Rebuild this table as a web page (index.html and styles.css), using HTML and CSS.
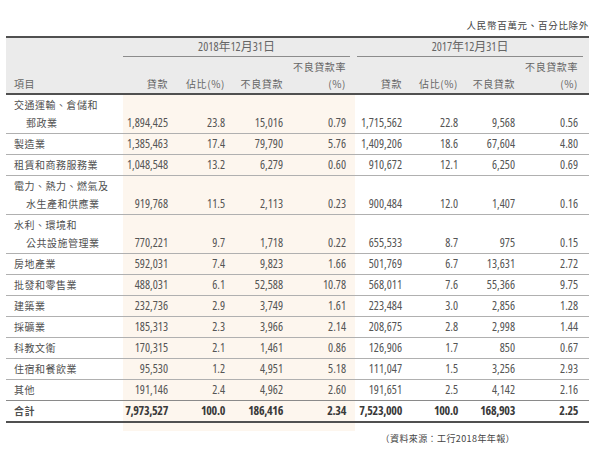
FILE: index.html
```html
<!DOCTYPE html>
<html lang="zh-Hant">
<head>
<meta charset="utf-8">
<title>貸款行業分布</title>
<link rel="stylesheet" href="styles.css">
</head>
<body>
<div class="page">
  <div class="unit">人民幣百萬元、百分比除外</div>
  <table class="loans">
    <colgroup>
      <col class="w-item"><col class="w-a"><col class="w-b"><col class="w-c"><col class="w-d"><col class="w-e"><col class="w-f"><col class="w-g"><col class="w-h">
    </colgroup>
    <thead>
      <tr class="h-group">
        <th></th>
        <th colspan="4"><div class="grp-label grp18">2018年12月31日</div></th>
        <th colspan="4"><div class="grp-label grp17">2017年12月31日</div></th>
      </tr>
      <tr class="h-cols">
        <th class="h-item">項目</th>
        <th>貸款</th>
        <th>佔比(%)</th>
        <th>不良貸款</th>
        <th>不良貸款率<br>(%)</th>
        <th>貸款</th>
        <th>佔比(%)</th>
        <th>不良貸款</th>
        <th>不良貸款率<br>(%)</th>
      </tr>
    </thead>
    <tbody>
      <tr><td class="item">交通運輸、倉儲和<span class="cont">郵政業</span></td><td class="s">1,894,425</td><td class="s">23.8</td><td class="s">15,016</td><td class="s">0.79</td><td>1,715,562</td><td>22.8</td><td>9,568</td><td>0.56</td></tr>
      <tr><td class="item">製造業</td><td class="s">1,385,463</td><td class="s">17.4</td><td class="s">79,790</td><td class="s">5.76</td><td>1,409,206</td><td>18.6</td><td>67,604</td><td>4.80</td></tr>
      <tr><td class="item">租賃和商務服務業</td><td class="s">1,048,548</td><td class="s">13.2</td><td class="s">6,279</td><td class="s">0.60</td><td>910,672</td><td>12.1</td><td>6,250</td><td>0.69</td></tr>
      <tr><td class="item">電力、熱力、燃氣及<span class="cont">水生產和供應業</span></td><td class="s">919,768</td><td class="s">11.5</td><td class="s">2,113</td><td class="s">0.23</td><td>900,484</td><td>12.0</td><td>1,407</td><td>0.16</td></tr>
      <tr><td class="item">水利、環境和<span class="cont">公共設施管理業</span></td><td class="s">770,221</td><td class="s">9.7</td><td class="s">1,718</td><td class="s">0.22</td><td>655,533</td><td>8.7</td><td>975</td><td>0.15</td></tr>
      <tr><td class="item">房地產業</td><td class="s">592,031</td><td class="s">7.4</td><td class="s">9,823</td><td class="s">1.66</td><td>501,769</td><td>6.7</td><td>13,631</td><td>2.72</td></tr>
      <tr><td class="item">批發和零售業</td><td class="s">488,031</td><td class="s">6.1</td><td class="s">52,588</td><td class="s">10.78</td><td>568,011</td><td>7.6</td><td>55,366</td><td>9.75</td></tr>
      <tr><td class="item">建築業</td><td class="s">232,736</td><td class="s">2.9</td><td class="s">3,749</td><td class="s">1.61</td><td>223,484</td><td>3.0</td><td>2,856</td><td>1.28</td></tr>
      <tr><td class="item">採礦業</td><td class="s">185,313</td><td class="s">2.3</td><td class="s">3,966</td><td class="s">2.14</td><td>208,675</td><td>2.8</td><td>2,998</td><td>1.44</td></tr>
      <tr><td class="item">科教文衛</td><td class="s">170,315</td><td class="s">2.1</td><td class="s">1,461</td><td class="s">0.86</td><td>126,906</td><td>1.7</td><td>850</td><td>0.67</td></tr>
      <tr><td class="item">住宿和餐飲業</td><td class="s">95,530</td><td class="s">1.2</td><td class="s">4,951</td><td class="s">5.18</td><td>111,047</td><td>1.5</td><td>3,256</td><td>2.93</td></tr>
      <tr class="pre-total"><td class="item">其他</td><td class="s">191,146</td><td class="s">2.4</td><td class="s">4,962</td><td class="s">2.60</td><td>191,651</td><td>2.5</td><td>4,142</td><td>2.16</td></tr>
      <tr class="total"><td class="item">合計</td><td class="s">7,973,527</td><td class="s">100.0</td><td class="s">186,416</td><td class="s">2.34</td><td>7,523,000</td><td>100.0</td><td>168,903</td><td>2.25</td></tr>
    </tbody>
  </table>
  <div class="shade-tail"></div>
  <div class="source">（資料來源：工行2018年年報）</div>
</div>
</body>
</html>
```

FILE: styles.css
```css
html, body {
  margin: 0;
  padding: 0;
  background: #ffffff;
}

body {
  font-family: "Open Sans", "Noto Sans CJK TC", sans-serif;
  font-stretch: 75%;
  color: #555555;
}

.page {
  width: 583px;
  padding: 18px 0 0 6px;
}

.unit {
  text-align: right;
  font-family: "Noto Sans CJK TC", sans-serif;
  font-size: 9.5px;
  line-height: 14px;
  letter-spacing: 0.7px;
  color: #444444;
  margin-bottom: 4px;
}

.loans {
  width: 583px;
  table-layout: fixed;
  border-collapse: collapse;
  border-top: 2px solid #505050;
  border-bottom: 2px solid #505050;
}

.w-item { width: 117px; }
.w-a { width: 54px; }
.w-b { width: 57px; }
.w-c { width: 58px; }
.w-d { width: 63px; }
.w-e { width: 56px; }
.w-f { width: 56px; }
.w-g { width: 57px; }
.w-h { width: 65px; }

.loans th {
  background: #ebebeb;
  font-weight: normal;
  color: #666666;
  padding: 0;
  white-space: nowrap;
}

.h-group th {
  height: 19px;
  vertical-align: bottom;
}

.grp-label {
  font-size: 12px;
  line-height: 18px;
  text-align: center;
  border-bottom: 1px solid #8c8c8c;
}

.grp18 { margin: 0 5px 0 0; }
.grp17 { margin: 0 6px 0 2px; }

.h-cols th {
  height: 35px;
  vertical-align: bottom;
  text-align: right;
  padding: 0 9px 1px 0;
  font-family: "Noto Sans CJK TC", sans-serif;
  font-size: 10px;
  line-height: 17px;
  letter-spacing: 0.6px;
  border-bottom: 2px solid #505050;
}

.h-cols th:last-child { padding-right: 11px; }

.h-cols .h-item {
  text-align: left;
  padding-left: 8px;
}

.loans td {
  font-size: 12px;
  line-height: 18px;
  padding: 1px 9px 1px 0;
  text-align: right;
  vertical-align: bottom;
  border-bottom: 1px solid #b0b0b0;
  white-space: nowrap;
}

.loans td:last-child { padding-right: 11px; }

.loans td.s { background: #fdf6ee; }

.loans td.item {
  text-align: left;
  padding-left: 8px;
  font-family: "Noto Sans CJK TC", sans-serif;
  font-size: 10px;
  letter-spacing: 0.5px;
  color: #505050;
}

.cont {
  display: block;
  padding-left: 12px;
}

.pre-total td { border-bottom: 1px solid #8a8a8a; }

.total td {
  font-weight: bold;
  color: #3a3a3a;
  letter-spacing: -0.3px;
}

.shade-tail {
  margin-left: 117px;
  width: 232px;
  height: 8px;
  background: #fdf6ee;
}

.source {
  text-align: right;
  padding-right: 74px;
  margin-top: 1px;
  font-family: "Noto Sans CJK TC", sans-serif;
  font-size: 9px;
  line-height: 14px;
  letter-spacing: 0.4px;
  color: #444444;
}
```
